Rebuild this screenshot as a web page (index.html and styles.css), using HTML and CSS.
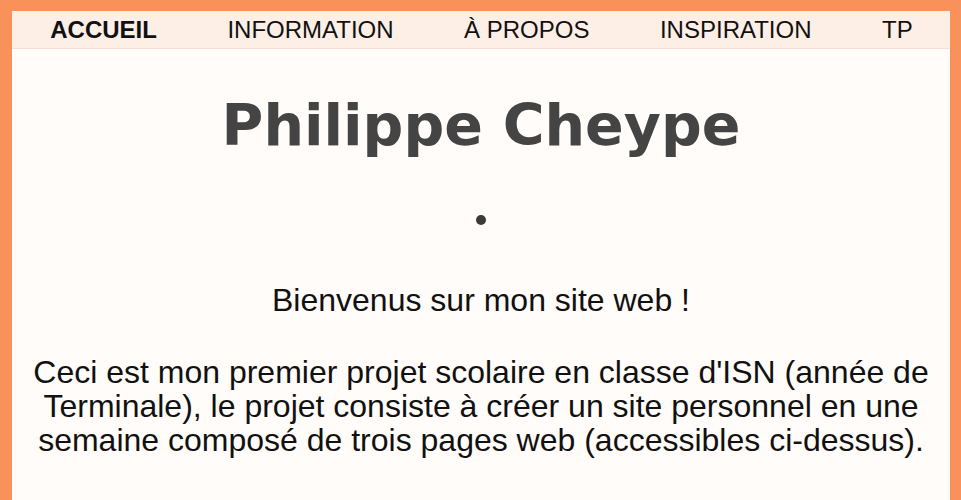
FILE: index.html
```html
<!DOCTYPE html>
<html lang="fr">
<head>
<meta charset="utf-8">
<title>Philippe Cheype</title>
<link rel="stylesheet" href="styles.css">
</head>
<body>
<div class="page">
  <nav class="nav">
    <a class="nav-link active" href="#">ACCUEIL</a>
    <a class="nav-link" href="#">INFORMATION</a>
    <a class="nav-link" href="#">À PROPOS</a>
    <a class="nav-link" href="#">INSPIRATION</a>
    <a class="nav-link" href="#">TP</a>
  </nav>
  <main class="content">
    <h1 class="title">Philippe Cheype</h1>
    <ul class="dots"><li class="dot-item"></li></ul>
    <p class="welcome">Bienvenus sur mon site web !</p>
    <p class="intro">Ceci est mon premier projet scolaire en classe d'ISN (année de Terminale), le projet consiste à créer un site personnel en une semaine composé de trois pages web (accessibles ci-dessus).</p>
  </main>
</div>
</body>
</html>
```
FILE: styles.css
```css
html, body {
  margin: 0;
  padding: 0;
}
body {
  background: #f9925a;
  padding: 11px 11px 0 12px;
  font-family: "Liberation Sans", Arial, sans-serif;
}
.page {
  background: #fffcf9;
  min-height: calc(100vh - 11px);
}
.nav {
  display: flex;
  justify-content: space-around;
  align-items: center;
  height: 37px;
  padding: 0 2px 0 3px;
  background: #fdeee6;
  border-bottom: 1px solid #f3dfd5;
}
.nav-link {
  color: #111;
  text-decoration: none;
  font-size: 24px;
}
.nav-link.active {
  font-weight: bold;
}
.content {
  text-align: center;
}
.title {
  font-family: "DejaVu Sans", Verdana, sans-serif;
  font-weight: bold;
  font-size: 57px;
  color: #444;
  margin: 0;
  padding-top: 42px;
  line-height: 68px;
}
.dots {
  list-style: none;
  margin: 56px 0 0;
  padding: 0;
  display: flex;
  justify-content: center;
}
.dot-item {
  width: 10px;
  height: 10px;
  border-radius: 50%;
  background: #3a3a3a;
}
.welcome {
  font-size: 32px;
  margin: 58px 0 0;
  line-height: 34px;
  color: #111;
}
.intro {
  font-size: 32px;
  line-height: 34px;
  margin: 38px 0 0;
  color: #111;
}
```
